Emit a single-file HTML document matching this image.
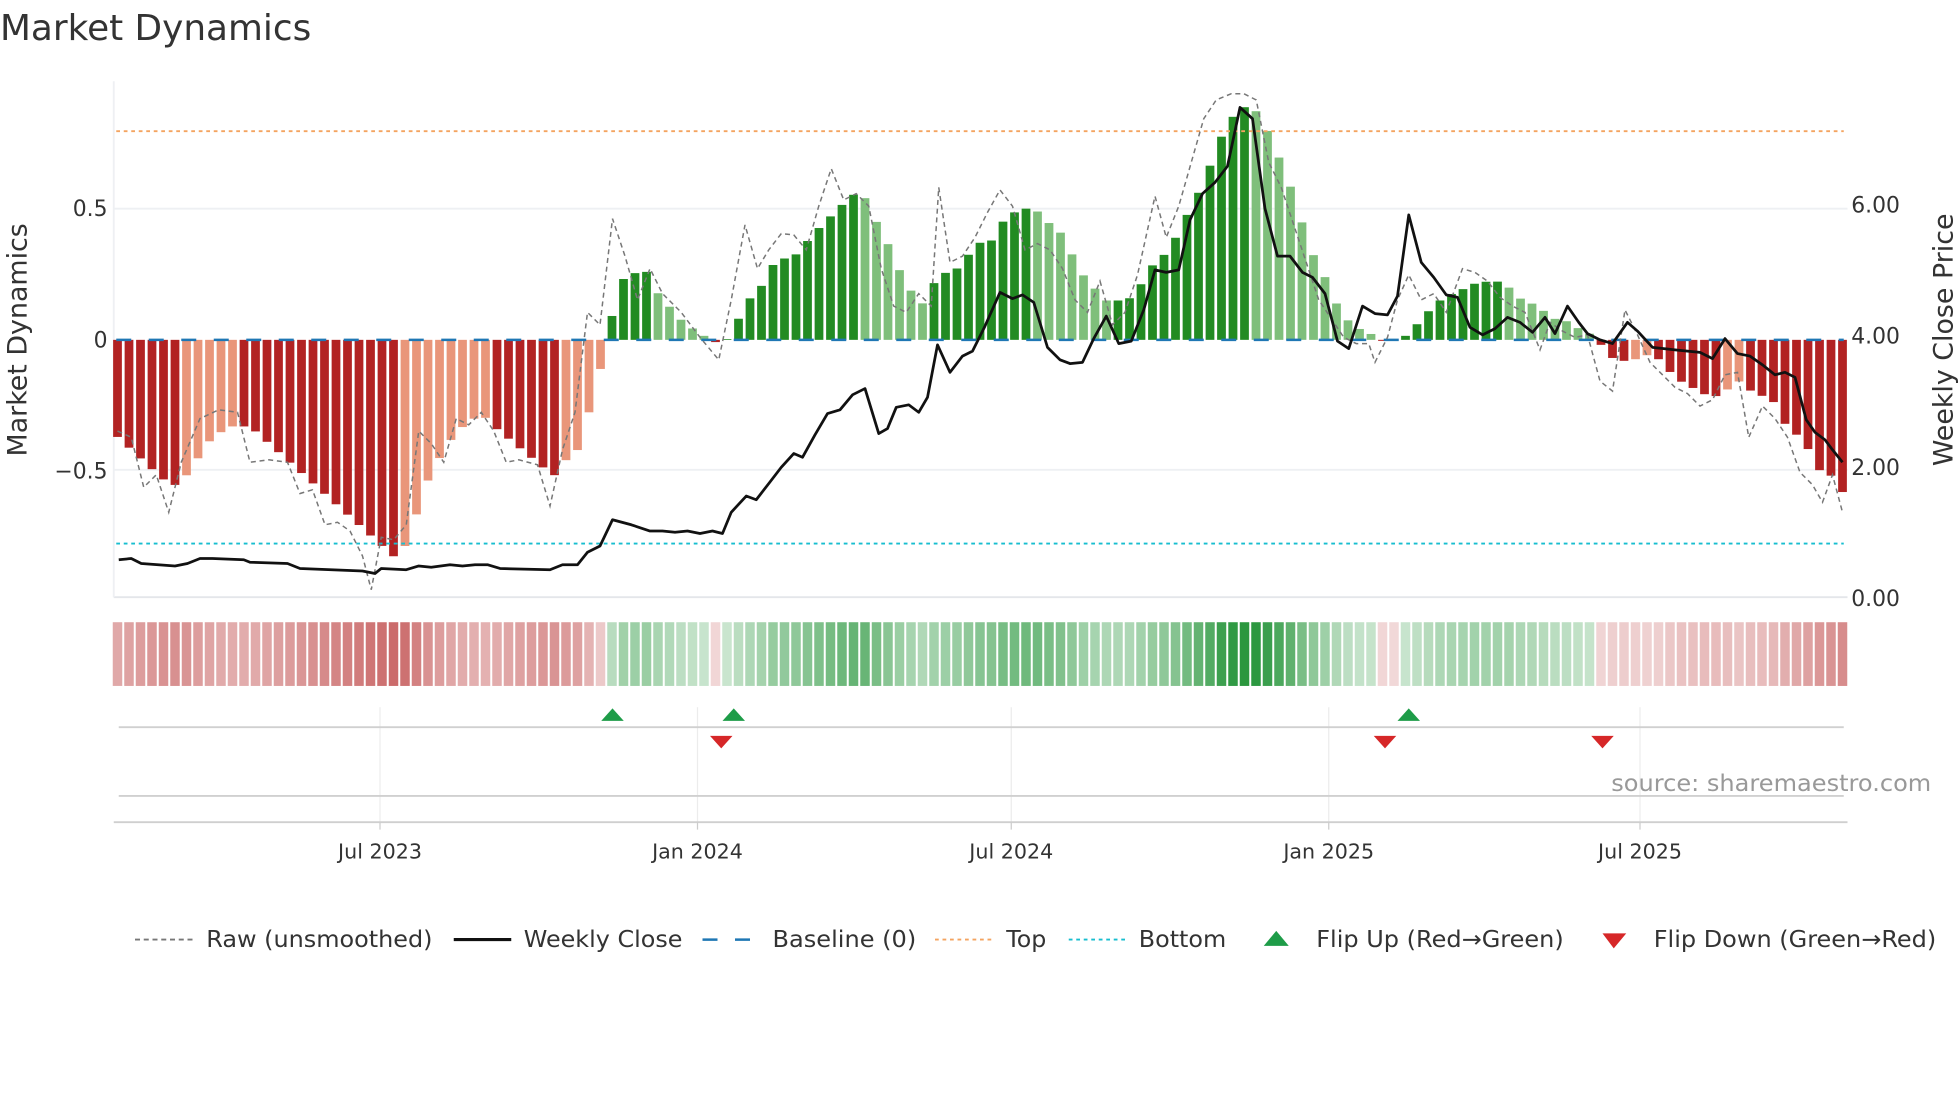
<!DOCTYPE html>
<html><head><meta charset="utf-8"><style>
html,body{margin:0;padding:0;background:#fff;width:1960px;height:1102px;overflow:hidden}
svg{display:block}
text{font-family:"DejaVu Sans","Liberation Sans",sans-serif;fill:#333}
</style></head><body>
<svg id="s" width="1960" height="1102" viewBox="0 0 1568 882" preserveAspectRatio="none" xmlns="http://www.w3.org/2000/svg">
<rect width="1568" height="882" fill="#fff"/>
<text x="0" y="32" font-size="28.5" textLength="249" lengthAdjust="spacingAndGlyphs">Market Dynamics</text>
<line x1="91" y1="167" x2="1478" y2="167" stroke="#eef0f3" stroke-width="1.5"/>
<line x1="91" y1="376" x2="1478" y2="376" stroke="#eef0f3" stroke-width="1.5"/>
<line x1="91" y1="478" x2="1478" y2="478" stroke="#e4e6ea" stroke-width="1.5"/>
<line x1="91" y1="65" x2="91" y2="478" stroke="#eef0f3" stroke-width="1.5"/>
<g id="bars"></g>
<line x1="93" y1="105" x2="1475" y2="105" stroke="#f4a460" stroke-width="1.5" stroke-dasharray="3,3"/>
<line x1="93" y1="435" x2="1475" y2="435" stroke="#17becf" stroke-width="1.5" stroke-dasharray="3,3"/>
<line x1="93" y1="272" x2="1475" y2="272" stroke="#1f77b4" stroke-width="2" stroke-dasharray="12,14"/>
<polyline id="raw" fill="none" stroke="#777" stroke-width="1.2" stroke-dasharray="4,3"/>
<polyline id="price" fill="none" stroke="#111" stroke-width="2.2" stroke-linejoin="round"/>
<g font-size="17.5">
<text x="86" y="173" text-anchor="end">0.5</text>
<text x="86" y="278" text-anchor="end">0</text>
<text x="86" y="383" text-anchor="end">−0.5</text>
<text x="1481" y="170">6.00</text>
<text x="1481" y="275">4.00</text>
<text x="1481" y="380">2.00</text>
<text x="1481" y="485">0.00</text>
</g>
<text transform="translate(21,272) rotate(-90)" font-size="21.5" text-anchor="middle">Market Dynamics</text>
<text transform="translate(1562,272) rotate(-90)" font-size="21.5" text-anchor="middle">Weekly Close Price</text>
<g id="heat"></g>
<g stroke="#ececec" stroke-width="1">
<line x1="304" y1="566" x2="304" y2="658"/><line x1="558" y1="566" x2="558" y2="658"/><line x1="809" y1="566" x2="809" y2="658"/><line x1="1063" y1="566" x2="1063" y2="658"/><line x1="1312" y1="566" x2="1312" y2="658"/>
</g>
<line x1="95" y1="582" x2="1475" y2="582" stroke="#d0d0d0" stroke-width="1.5"/>
<line x1="95" y1="637" x2="1475" y2="637" stroke="#d0d0d0" stroke-width="1.5"/>
<line x1="91" y1="658" x2="1478" y2="658" stroke="#cfcfcf" stroke-width="1.5"/>
<g fill="#1e9c48"><polygon points="481,577 490,567 499,577"/><polygon points="578,577 587,567 596,577"/><polygon points="1118,577 1127,567 1136,577"/></g>
<g fill="#d62728"><polygon points="568,589 586,589 577,599"/><polygon points="1099,589 1117,589 1108,599"/><polygon points="1273,589 1291,589 1282,599"/></g>
<g stroke="#ccc"><line x1="304" y1="658" x2="304" y2="664"/><line x1="558" y1="658" x2="558" y2="664"/><line x1="809" y1="658" x2="809" y2="664"/><line x1="1063" y1="658" x2="1063" y2="664"/><line x1="1312" y1="658" x2="1312" y2="664"/></g>
<g font-size="16.5" text-anchor="middle">
<text x="304" y="687">Jul 2023</text><text x="558" y="687">Jan 2024</text><text x="809" y="687">Jul 2024</text><text x="1063" y="687">Jan 2025</text><text x="1312" y="687">Jul 2025</text>
</g>
<text x="1545" y="633" font-size="18.5" text-anchor="end" textLength="256" lengthAdjust="spacingAndGlyphs" style="fill:#999">source: sharemaestro.com</text>
<g font-size="18.5">
<line x1="108" y1="752" x2="154" y2="752" stroke="#777" stroke-width="1.5" stroke-dasharray="4,3"/>
<text x="165" y="758" textLength="181" lengthAdjust="spacingAndGlyphs">Raw (unsmoothed)</text>
<line x1="363" y1="752" x2="409" y2="752" stroke="#111" stroke-width="2.5"/>
<text x="419" y="758" textLength="127" lengthAdjust="spacingAndGlyphs">Weekly Close</text>
<line x1="562" y1="752" x2="608" y2="752" stroke="#1f77b4" stroke-width="2" stroke-dasharray="12,14"/>
<text x="618" y="758" textLength="115" lengthAdjust="spacingAndGlyphs">Baseline (0)</text>
<line x1="748" y1="752" x2="794" y2="752" stroke="#f4a460" stroke-width="1.5" stroke-dasharray="3,3"/>
<text x="805" y="758" textLength="32" lengthAdjust="spacingAndGlyphs">Top</text>
<line x1="855" y1="752" x2="901" y2="752" stroke="#17becf" stroke-width="1.5" stroke-dasharray="3,3"/>
<text x="911" y="758" textLength="70" lengthAdjust="spacingAndGlyphs">Bottom</text>
<polygon points="1011,757 1021,745 1031,757" fill="#1e9c48"/>
<text x="1053" y="758" textLength="198" lengthAdjust="spacingAndGlyphs">Flip Up (Red→Green)</text>
<polygon points="1282,747 1301,747 1291,759" fill="#d62728"/>
<text x="1323" y="758" textLength="226" lengthAdjust="spacingAndGlyphs">Flip Down (Green→Red)</text>
</g>
</svg>
<script>
var K=[[94,-.37],[130,-.53],[143,-.56],[170,-.37],[185,-.33],[200,-.33],[316,-.83],[325,-.78],[345,-.5],[365,-.35],[385,-.28],[395,-.33],[443,-.52],[450,-.47],[462,-.42],[471,-.28],[481,-.1],[490,.1],[500,.25],[519,.26],[528,.16],[537,.12],[546,.07],[555,.04],[565,.01],[577,-.02],[587,.03],[596,.15],[606,.17],[615,.27],[624,.31],[634,.31],[643,.36],[652,.41],[662,.46],[671,.5],[680,.55],[690,.56],[699,.47],[712,.35],[721,.25],[731,.17],[740,.13],[750,.25],[762,.26],[771,.29],[781,.38],[790,.35],[800,.44],[809,.48],[818,.5],[828,.5],[837,.45],[846,.43],[856,.34],[866,.25],[875,.2],[885,.15],[895,.15],[905,.16],[914,.22],[924,.3],[933,.33],[943,.41],[952,.5],[961,.58],[971,.7],[981,.82],[990,.87],[1000,.9],[1010,.84],[1020,.73],[1030,.62],[1040,.47],[1050,.33],[1059,.25],[1069,.14],[1079,.07],[1088,.04],[1098,.02],[1108,-.01],[1118,0.003],[1127,.02],[1137,.08],[1147,.13],[1157,.17],[1166,.18],[1176,.21],[1186,.22],[1196,.225],[1205,.21],[1215,.16],[1225,.14],[1235,.11],[1244,.08],[1254,.07],[1264,.04],[1273,.02],[1283,-.03],[1292,-.08],[1302,-.08],[1312,-.07],[1322,-.05],[1332,-.1],[1341,-.15],[1350,-.17],[1360,-.2],[1370,-.22],[1380,-.2],[1389,-.15],[1399,-.19],[1408,-.21],[1418,-.23],[1428,-.32],[1437,-.36],[1447,-.42],[1456,-.5],[1466,-.52],[1474,-.58]];
function val(x){for(var i=1;i<K.length;i++){if(x<=K[i][0]){var a=K[i-1],b=K[i];return a[1]+(b[1]-a[1])*(x-a[0])/(b[0]-a[0]);}}return K[K.length-1][1];}
var N=151,x0=94,dx=(1474-94)/150,bw=7,B='',H='',prev=null;
for(var i=0;i<N;i++){var x=x0+i*dx,v=val(x);var d=prev===null?v:v-prev;prev=v;var c;
if(v>=0)c=d>=0?'#228b22':'#7fbf7b';else c=d<=0?'#b22222':'#e9967a';
var y=272-v*210,h=Math.abs(v*210);B+='<rect x="'+(x-bw/2).toFixed(1)+'" y="'+Math.min(y,272).toFixed(1)+'" width="'+bw+'" height="'+h.toFixed(1)+'" fill="'+c+'"/>';
var a=0.25+0.75*Math.min(1,Math.abs(v)/0.9),hc=v>=0?'rgba(40,150,60,'+a.toFixed(2)+')':'rgba(190,70,70,'+(a*0.85).toFixed(2)+')';
H+='<rect x="'+(x-dx/2+0.8).toFixed(1)+'" y="498" width="'+(dx-1.6).toFixed(1)+'" height="51" fill="'+hc+'"/>';}
document.getElementById('bars').innerHTML=B;document.getElementById('heat').innerHTML=H;
document.getElementById('price').setAttribute('points',"95,448 105,447 113,451 140,453 150,451 160,447 170,447 195,448 200,450 230,451 240,455 290,457 300,459 305,455 325,456 335,453 345,454 360,452 370,453 380,452 390,452 400,455 440,456 450,452 462,452 470,442 480,437 490,416 505,420 520,425 530,425 540,426 550,425 560,427 570,425 578,427 585,410 597,397 605,400 615,387 625,374 635,363 642,366 652,348 662,331 672,328 682,316 692,311 703,347 710,343 717,326 727,324 735,330 742,318 750,276 760,298 770,285 778,281 788,261 800,234 810,239 818,236 827,242 838,278 848,288 856,291 866,290 875,271 885,253 895,275 905,273 915,248 924,216 933,218 943,216 952,176 962,155 972,146 982,133 992,86 1002,95 1012,167 1022,205 1032,205 1042,218 1050,222 1060,235 1070,273 1079,279 1090,245 1100,251 1110,252 1118,237 1127,172 1137,210 1147,222 1157,236 1166,238 1176,262 1186,268 1196,263 1206,254 1216,258 1226,266 1236,254 1244,267 1254,245 1263,258 1270,267 1280,272 1290,275 1302,258 1310,265 1322,278 1340,280 1360,282 1370,287 1380,271 1390,283 1400,285 1410,292 1420,300 1428,298 1436,302 1445,336 1452,346 1460,352 1466,360 1474,370");
document.getElementById('raw').setAttribute('points',"94,345 105,350 115,390 125,380 135,410 145,370 160,335 175,328 190,330 200,370 215,368 230,370 240,395 250,392 260,420 270,418 280,425 290,445 297,472 305,430 315,432 325,420 335,345 345,355 355,370 365,335 375,340 385,330 395,345 405,370 415,368 430,372 440,405 450,360 460,330 470,250 480,260 490,175 500,205 510,240 520,215 530,235 545,250 560,270 575,288 585,240 596,180 606,215 615,200 625,187 635,188 645,200 655,165 665,135 675,160 685,155 695,165 705,215 715,245 725,250 735,235 745,245 751,150 760,210 770,205 780,190 790,170 800,152 810,165 820,200 830,195 840,200 850,215 860,240 870,250 880,225 890,260 900,250 910,220 924,157 933,190 943,165 953,130 963,95 973,80 985,75 995,75 1005,80 1015,130 1025,150 1035,180 1045,210 1055,240 1065,255 1075,270 1085,275 1095,275 1100,290 1110,270 1118,240 1127,220 1137,240 1147,235 1157,250 1170,215 1180,218 1190,225 1200,238 1210,245 1220,250 1232,280 1240,258 1250,265 1260,270 1270,268 1280,305 1290,313 1300,248 1310,268 1320,290 1330,300 1340,310 1350,315 1360,325 1370,320 1380,300 1390,298 1399,350 1410,325 1420,335 1430,350 1440,378 1450,388 1458,402 1466,380 1474,410");
</script>
</body></html>
